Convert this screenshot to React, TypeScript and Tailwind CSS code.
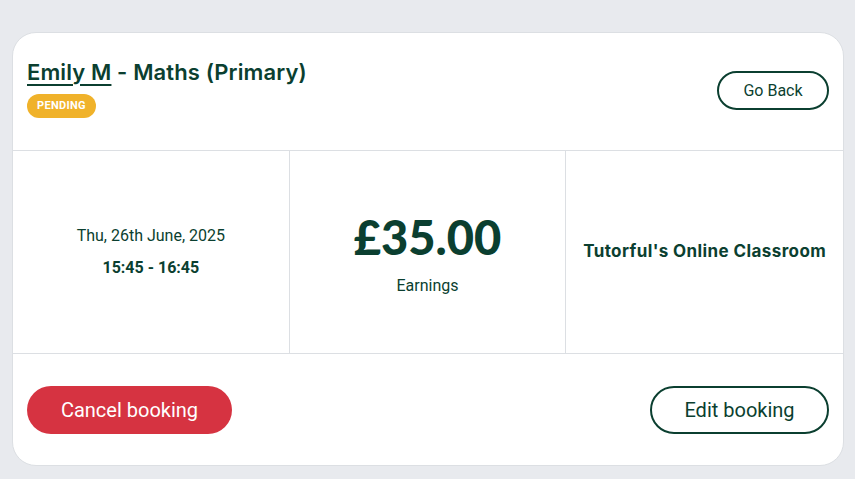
import React from "react";

const heading = { fontFamily: "Inter, 'Noto Sans', sans-serif" };
const lato = { fontFamily: "Lato, 'Noto Sans', sans-serif" };

export default function App() {
  return (
    <div className="min-h-[479px] w-full bg-[#e8eaee] pt-8 pb-3 pl-3 pr-[11px]" style={{ fontFamily: "Roboto, 'Liberation Sans', sans-serif" }}>
      <div className="rounded-[24px] border border-[#dcdfe3] bg-white text-[#0b3f30] overflow-hidden">
        <div className="flex items-start justify-between pl-[14px] pr-[14px] pt-[23px] pb-[32px]">
          <div className="flex flex-col">
            <h1 className="text-[22px] leading-[32px] font-semibold tracking-[0.12px]" style={heading}>
              <span className="underline underline-offset-[4px] decoration-[2px]">Emily M</span> - Maths (Primary)
            </h1>
            <span className="mt-[6px] self-start rounded-full bg-[#f0b22a] px-[10px] h-6 flex items-center text-[11px] font-bold tracking-[0.3px] text-white">PENDING</span>
          </div>
          <button className="mt-[15px] h-[39px] w-[112px] rounded-full border-2 border-[#0b3f30] text-[16px] text-[#0b3f30]">Go Back</button>
        </div>
        <div className="grid grid-cols-3 h-[204px] border-t border-b border-[#dcdfe3]">
          <div className="flex flex-col items-center justify-center border-r border-[#dcdfe3]">
            <div className="text-[16px] leading-5">Thu, 26th June, 2025</div>
            <div className="mt-3 text-[16px] leading-5 font-bold">15:45 - 16:45</div>
          </div>
          <div className="flex flex-col items-center justify-center border-r border-[#dcdfe3] pt-[2px]">
            <div className="text-[47px] leading-[52px] font-black" style={lato}>£35.00</div>
            <div className="mt-[13px] text-[16px] leading-5">Earnings</div>
          </div>
          <div className="flex items-center justify-center">
            <div className="text-[17px] font-bold tracking-[0.4px]" style={heading}>Tutorful's Online Classroom</div>
          </div>
        </div>
        <div className="flex items-center justify-between px-[14px] h-[111px]">
          <button className="h-12 w-[205px] rounded-full bg-[#d63341] text-white text-[20px]">Cancel booking</button>
          <button className="h-12 w-[179px] rounded-full border-2 border-[#0b3f30] text-[#0b3f30] text-[20px]">Edit booking</button>
        </div>
      </div>
    </div>
  );
}
